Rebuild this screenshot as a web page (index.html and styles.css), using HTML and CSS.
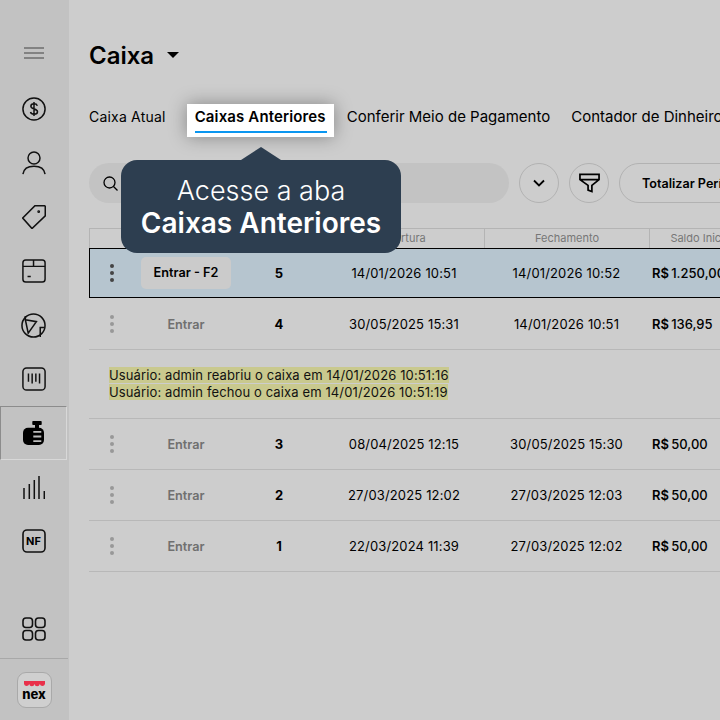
FILE: index.html
```html
<!DOCTYPE html>
<html lang="pt-BR">
<head>
<meta charset="utf-8">
<title>Caixa</title>
<link rel="stylesheet" href="styles.css">
</head>
<body>
<aside class="sidebar">
  <div class="side-menu"><svg width="20" height="12" viewBox="0 0 20 12" class="ico-grey"><path d="M0 1h20M0 6h20M0 11h20"/></svg></div>
  <div class="side-item"><svg width="24" height="24" viewBox="0 0 26 26"><circle cx="13" cy="13" r="12"/><path d="M16.600 9.400c-.5-1.400-1.800-2-3.600-2-2 0-3.400 1-3.400 2.700 0 3.800 7.200 1.900 7.200 5.800 0 1.700-1.500 2.700-3.800 2.700-2 0-3.400-.8-3.800-2.300M13 5.500v15"/></svg></div>
  <div class="side-item"><svg width="24" height="24" viewBox="0 0 26 26"><circle cx="13" cy="7.500" r="6.500"/><path d="M1 25c.8-5.500 5.500-8.500 12-8.500S24.200 19.500 25 25"/></svg></div>
  <div class="side-item"><svg width="24" height="24" viewBox="0 0 24 24"><path d="M.7 13 13 .7h9.500l.8.8v9.300L10 23.500z"/><circle cx="16.700" cy="6.700" r=".6"/></svg></div>
  <div class="side-item"><svg width="24" height="24" viewBox="0 0 26 26"><rect x="1" y="1" width="24" height="24" rx="3"/><path d="M1 8h24M12.500 1v7M6 19h3.500"/></svg></div>
  <div class="side-item"><svg width="25" height="25" viewBox="0 0 26 26"><circle cx="13" cy="13" r="12"/><path d="M4.500 7 16 9 7.500 21zM4.500 3v4M24.500 15H20v10"/></svg></div>
  <div class="side-item"><svg width="24" height="24" viewBox="0 0 26 26"><rect x="1" y="1" width="24" height="24" rx="4"/><path d="M7 7v9M11 7v11M15 7v9M19 7v11"/></svg></div>
  <div class="side-item side-active"><svg width="22" height="24" viewBox="0 0 22 24" class="ico-fill"><rect x="9.300" y="0" width="9.400" height="4" rx=".8"/><rect x="12" y="3" width="4" height="5"/><rect x="0" y="6.800" width="21" height="17.200" rx="5"/><path class="ico-cut" d="M10.300 10.800h8M10.300 15.500h8M10.300 20.200h8"/></svg></div>
  <div class="side-item"><svg width="22" height="24" viewBox="0 0 22 24" class="ico-bars"><path d="M1 24V13M6.300 24V9M11.300 24V5M16 24V1M21.300 24v-8"/></svg></div>
  <div class="side-item"><svg width="24" height="24" viewBox="0 0 24 24"><rect x="1" y="1" width="22" height="22" rx="4"/></svg><span class="nf">NF</span></div>
  <div class="side-spacer"></div>
  <div class="side-apps"><svg width="24" height="24" viewBox="0 0 24 24"><rect x="1" y="1" width="9.500" height="9.500" rx="3"/><rect x="13.500" y="1" width="9.500" height="9.500" rx="3"/><rect x="1" y="13.500" width="9.500" height="9.500" rx="3"/><rect x="13.500" y="13.500" width="9.500" height="9.500" rx="3"/></svg></div>
  <div class="side-logo">
    <div class="logo-box">
      <svg width="21" height="6" viewBox="0 0 21 6" class="awning"><path d="M0 0h21v3a2.700 2.700 0 0 1-5.200 0 2.700 2.700 0 0 1-5.300 0 2.700 2.700 0 0 1-5.300 0A2.700 2.700 0 0 1 0 3z"/></svg>
      <span class="logo-text">nex</span>
    </div>
  </div>
</aside>

<main class="main">
  <h1 class="title">Caixa <span class="caret"></span></h1>

  <nav class="tabs">
    <span class="tab tab-first">Caixa Atual</span>
    <span class="tab tab-active">Caixas Anteriores</span>
    <span class="tab">Conferir Meio de Pagamento</span>
    <span class="tab">Contador de Dinheiro</span>
  </nav>

  <div class="toolbar">
    <div class="search"><svg width="15" height="15" viewBox="0 0 15 15"><circle cx="6.500" cy="6.500" r="5.500"/><path d="M10.500 10.500 14.500 14.500"/></svg></div>
    <button class="round"><svg width="12" height="8" viewBox="0 0 12 8" class="heavy"><path d="M1 1.500 6 6.500l5-5"/></svg></button>
    <button class="round"><svg width="21" height="20" viewBox="0 0 22 20" class="heavy"><path d="M1 1h20v5.500l-7.500 6V19l-4-1.500v-5L1 6.500zM1 6.500h20"/></svg></button>
    <button class="pill">Totalizar Período</button>
  </div>

  <section class="table">
    <div class="row head">
      <span></span><span></span><span></span>
      <span class="h-cell">Abertura</span>
      <span class="h-cell">Fechamento</span>
      <span class="h-cell">Saldo Inicial</span>
    </div>

    <div class="row selected">
      <span class="kebab"><i></i><i></i><i></i></span>
      <span class="enter"><b class="enter-btn">Entrar - F2</b></span>
      <span class="num">5</span>
      <span class="date date-open">14/01/2026 10:51</span>
      <span class="date">14/01/2026 10:52</span>
      <span class="money">R$ <em>1.250,00</em></span>
    </div>

    <div class="row line">
      <span class="kebab"><i></i><i></i><i></i></span>
      <span class="enter">Entrar</span>
      <span class="num">4</span>
      <span class="date date-open">30/05/2025 15:31</span>
      <span class="date">14/01/2026 10:51</span>
      <span class="money">R$ <em>136,95</em></span>
    </div>

    <div class="note">
      <mark>Usuário: admin reabriu o caixa em 14/01/2026 10:51:16</mark><br>
      <mark>Usuário: admin fechou o caixa em 14/01/2026 10:51:19</mark>
    </div>

    <div class="row line">
      <span class="kebab"><i></i><i></i><i></i></span>
      <span class="enter">Entrar</span>
      <span class="num">3</span>
      <span class="date date-open">08/04/2025 12:15</span>
      <span class="date">30/05/2025 15:30</span>
      <span class="money">R$ <em>50,00</em></span>
    </div>
    <div class="row line">
      <span class="kebab"><i></i><i></i><i></i></span>
      <span class="enter">Entrar</span>
      <span class="num">2</span>
      <span class="date date-open">27/03/2025 12:02</span>
      <span class="date">27/03/2025 12:03</span>
      <span class="money">R$ <em>50,00</em></span>
    </div>
    <div class="row line">
      <span class="kebab"><i></i><i></i><i></i></span>
      <span class="enter">Entrar</span>
      <span class="num">1</span>
      <span class="date date-open">22/03/2024 11:39</span>
      <span class="date">27/03/2025 12:02</span>
      <span class="money">R$ <em>50,00</em></span>
    </div>
  </section>

  <div class="tooltip">
    <span class="tip-light">Acesse a aba</span>
    <span class="tip-bold">Caixas Anteriores</span>
  </div>
</main>
</body>
</html>
```

FILE: styles.css
```css
* { box-sizing: border-box; }
html, body { height: 100%; }
body {
  margin: 0;
  display: flex;
  height: 720px;
  overflow: hidden;
  background: #cdcdcd;
  color: #000;
  font-family: Inter, "Noto Sans", sans-serif;
}

/* Sidebar */
.sidebar {
  width: 69px;
  flex: none;
  height: 720px;
  background: #c2c2c2;
  display: flex;
  flex-direction: column;
}
.sidebar svg { fill: none; stroke: #111; stroke-width: 1.6; }
.sidebar svg.ico-grey { stroke: #6e6e6e; stroke-width: 1.4; }
.sidebar svg.ico-bars { stroke-width: 1.5; }
.side-menu { width: 67px; height: 30px; margin-top: 38px; margin-bottom: 14px; display: flex; align-items: center; justify-content: center; }
.side-item { width: 67px; height: 54px; flex: none; display: flex; align-items: center; justify-content: center; position: relative; }
.side-active {
  border-top: 1px solid #8c8c8c;
  border-left: 1px solid #8c8c8c;
  border-right: 1px solid #d8d8d8;
  border-bottom: 1px solid #d8d8d8;
}
.sidebar svg.ico-fill { fill: #000; stroke: none; }
.sidebar svg.ico-fill .ico-cut { stroke: #bdbdbd; stroke-width: 1.8; fill: none; }
.nf { position: absolute; font-size: 11px; font-weight: 700; letter-spacing: .2px; }
.side-spacer { flex: 1; }
.side-apps { width: 67px; height: 58px; display: flex; align-items: center; justify-content: center; }
.side-logo { width: 68px; height: 62px; border-top: 1px solid #a8a8a8; display: flex; align-items: center; justify-content: center; }
.logo-box {
  width: 35px;
  height: 36px;
  border: 1px solid #a9a9a9;
  border-radius: 9px;
  background: #cfcfcf;
  display: flex;
  flex-direction: column;
  align-items: center;
  padding-top: 8px;
}
.sidebar svg.awning { fill: #e9304a; stroke: none; }
.logo-text { font-size: 13px; font-weight: 800; line-height: 13px; margin-top: 1px; }

/* Main */
.main { flex: 1; min-width: 0; padding-left: 20px; position: relative; overflow: hidden; }
.title { margin: 41px 0 0; height: 29px; font-size: 24px; line-height: 29px; font-weight: 600; display: flex; align-items: center; white-space: nowrap; }
.caret { width: 0; height: 0; margin-left: 13px; margin-top: -2px; border-left: 6px solid transparent; border-right: 6px solid transparent; border-top: 6px solid #000; }

.tabs { margin-top: 34px; height: 33px; display: flex; gap: 21px; white-space: nowrap; font-size: 15px; line-height: 25px; }
.tab { height: 33px; flex: none; }
.tab-first { font-size: 14px; letter-spacing: .2px; }
.tab-active {
  position: relative;
  z-index: 2;
  background: #fff;
  font-weight: 600;
  letter-spacing: .14px;
  padding: 0 8px;
  margin-right: -8px;
  box-shadow: 0 0 18px rgba(0,0,0,.35);
}
.tab-active::after { content: ""; position: absolute; left: 8px; right: 7px; top: 27px; height: 2px; background: #0a96f0; }

.toolbar { margin-top: 26px; height: 40px; display: flex; gap: 10px; }
.toolbar svg { fill: none; stroke: #000; stroke-width: 1.3; }
.toolbar svg.heavy { stroke-width: 1.8; }
.search { width: 420px; flex: none; border-radius: 20px; background: #c3c3c3; display: flex; align-items: center; padding-left: 14px; }
.round { width: 40px; height: 40px; flex: none; padding: 0; border-radius: 50%; border: 1px solid #b2b2b2; background: none; display: flex; align-items: center; justify-content: center; }
.pill { height: 40px; flex: none; padding: 0 22px; border-radius: 20px; border: 1px solid #b2b2b2; background: none; font-family: inherit; font-size: 12.600px; font-weight: 600; color: #000; white-space: nowrap; }

/* Table */
.table { margin-top: 25px; width: 680px; font-size: 13px; }
.row { display: grid; grid-template-columns: 46px 102px 84px 163px 165px 108px 1fr; align-items: center; }
.head { height: 20px; border-top: 1px solid #b4b4b4; border-left: 1px solid #b4b4b4; font-size: 11px; color: #777; grid-template-columns: 45px 102px 84px 163px 165px 104px 1fr; }
.h-cell { height: 19px; line-height: 18px; text-align: center; border-left: 1px solid #b4b4b4; white-space: nowrap; }
.selected { height: 50px; margin-bottom: 1px; background: #b6c5cf; border: 1px solid #000; grid-template-columns: 45px 102px 84px 163px 165px 108px 1fr; }
.line { height: 51px; border-bottom: 1px solid #b8b8b8; }

.kebab { display: flex; flex-direction: column; align-items: center; gap: 3px; }
.kebab i { width: 4px; height: 4px; border-radius: 50%; background: #989898; }
.selected .kebab { padding-right: 1px; }
.selected .kebab i { background: #444; }
.enter { text-align: center; font-size: 12.700px; font-weight: 600; color: #707070; }
.enter-btn { display: block; width: 90px; height: 32px; margin: 0 auto; border-radius: 5px; background: #cbcbcb; color: #000; font-weight: 600; line-height: 32px; }
.num { text-align: center; font-weight: 700; }
.date { text-align: center; white-space: nowrap; letter-spacing: .15px; }
.date-open { padding-left: 3px; }
.money { font-weight: 600; padding-left: 3px; white-space: nowrap; }
.money em { font-style: normal; font-weight: 500; margin-left: -1px; }

.note { height: 69px; padding: 17px 0 0 20px; border-bottom: 1px solid #b8b8b8; font-size: 13px; line-height: 17px; letter-spacing: .12px; }
.note mark { background: #c9c98e; color: #111; }

/* Tooltip */
.tooltip {
  position: absolute;
  z-index: 3;
  left: 52px;
  top: 160px;
  width: 280px;
  height: 93px;
  border-radius: 16px;
  background: #2d3e50;
  color: #fff;
  display: flex;
  flex-direction: column;
  align-items: center;
  padding-top: 14px;
  line-height: 33px;
}
.tooltip::before {
  content: "";
  position: absolute;
  left: 120px;
  top: -13px;
  border-left: 20px solid transparent;
  border-right: 20px solid transparent;
  border-bottom: 13px solid #2d3e50;
}
.tip-light { font-size: 27px; font-weight: 300; }
.tip-bold { font-size: 28px; font-weight: 600; }
```
